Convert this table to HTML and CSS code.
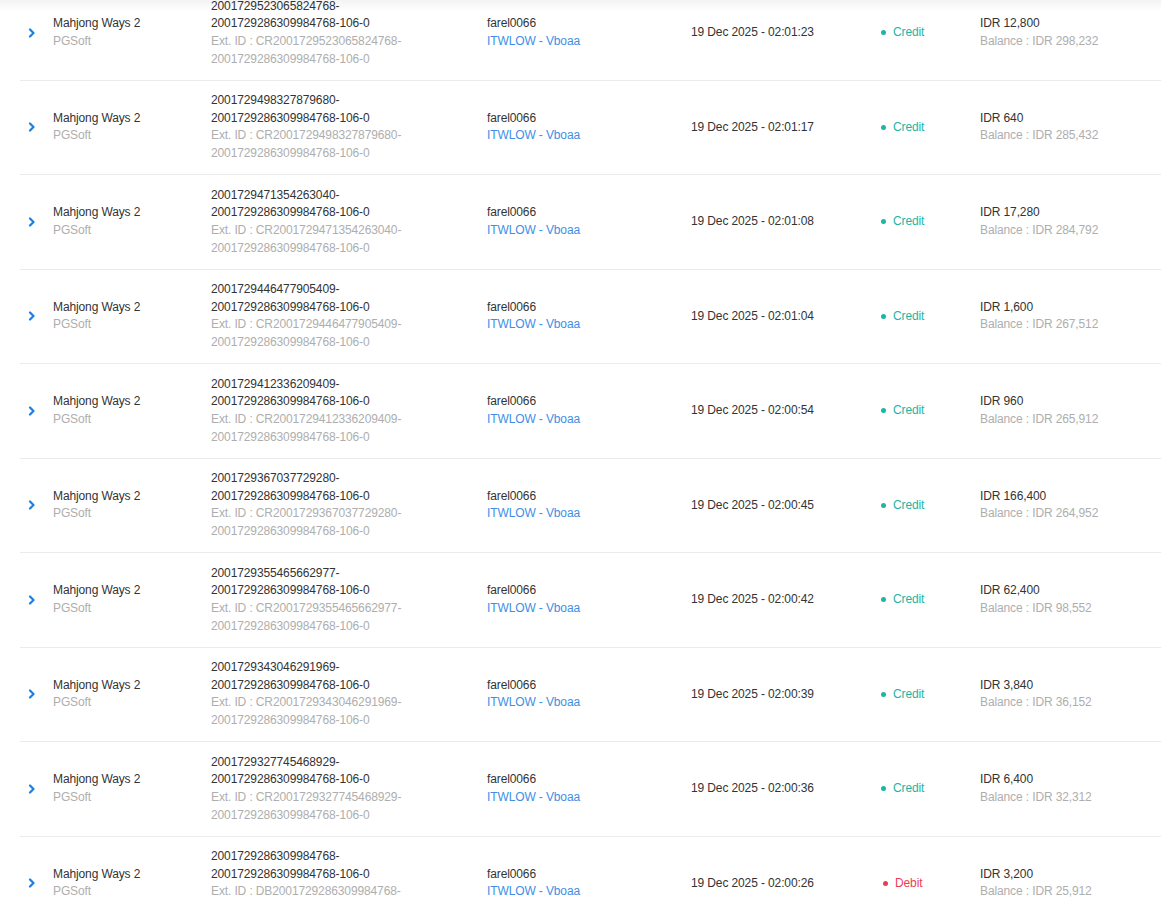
FILE: index.html
```html
<!DOCTYPE html>
<html lang="en">
<head>
<meta charset="utf-8">
<title>Transactions</title>
<link rel="stylesheet" href="styles.css">
</head>
<body>
<div class="top-shade"></div>
<div class="table">

  <div class="row">
    <div class="cell chev"><svg width="8" height="10" viewBox="0 0 8 10"><polyline points="2,1.5 5.5,5 2,8.5" fill="none" stroke="#1a7fe0" stroke-width="2.2" stroke-linecap="round" stroke-linejoin="round"/></svg></div>
    <div class="cell game"><div class="main">Mahjong Ways 2</div><div class="sub">PGSoft</div></div>
    <div class="cell ids"><div class="main">2001729523065824768-2001729286309984768-106-0</div><div class="sub">Ext. ID : CR2001729523065824768-2001729286309984768-106-0</div></div>
    <div class="cell player"><div class="main">farel0066</div><div class="link">ITWLOW - Vboaa</div></div>
    <div class="cell date">19 Dec 2025 - 02:01:23</div>
    <div class="cell status credit"><span class="dot"></span>Credit</div>
    <div class="cell amount"><div class="main">IDR 12,800</div><div class="sub">Balance : IDR 298,232</div></div>
  </div>

  <div class="row">
    <div class="cell chev"><svg width="8" height="10" viewBox="0 0 8 10"><polyline points="2,1.5 5.5,5 2,8.5" fill="none" stroke="#1a7fe0" stroke-width="2.2" stroke-linecap="round" stroke-linejoin="round"/></svg></div>
    <div class="cell game"><div class="main">Mahjong Ways 2</div><div class="sub">PGSoft</div></div>
    <div class="cell ids"><div class="main">2001729498327879680-2001729286309984768-106-0</div><div class="sub">Ext. ID : CR2001729498327879680-2001729286309984768-106-0</div></div>
    <div class="cell player"><div class="main">farel0066</div><div class="link">ITWLOW - Vboaa</div></div>
    <div class="cell date">19 Dec 2025 - 02:01:17</div>
    <div class="cell status credit"><span class="dot"></span>Credit</div>
    <div class="cell amount"><div class="main">IDR 640</div><div class="sub">Balance : IDR 285,432</div></div>
  </div>

  <div class="row">
    <div class="cell chev"><svg width="8" height="10" viewBox="0 0 8 10"><polyline points="2,1.5 5.5,5 2,8.5" fill="none" stroke="#1a7fe0" stroke-width="2.2" stroke-linecap="round" stroke-linejoin="round"/></svg></div>
    <div class="cell game"><div class="main">Mahjong Ways 2</div><div class="sub">PGSoft</div></div>
    <div class="cell ids"><div class="main">2001729471354263040-2001729286309984768-106-0</div><div class="sub">Ext. ID : CR2001729471354263040-2001729286309984768-106-0</div></div>
    <div class="cell player"><div class="main">farel0066</div><div class="link">ITWLOW - Vboaa</div></div>
    <div class="cell date">19 Dec 2025 - 02:01:08</div>
    <div class="cell status credit"><span class="dot"></span>Credit</div>
    <div class="cell amount"><div class="main">IDR 17,280</div><div class="sub">Balance : IDR 284,792</div></div>
  </div>

  <div class="row">
    <div class="cell chev"><svg width="8" height="10" viewBox="0 0 8 10"><polyline points="2,1.5 5.5,5 2,8.5" fill="none" stroke="#1a7fe0" stroke-width="2.2" stroke-linecap="round" stroke-linejoin="round"/></svg></div>
    <div class="cell game"><div class="main">Mahjong Ways 2</div><div class="sub">PGSoft</div></div>
    <div class="cell ids"><div class="main">2001729446477905409-2001729286309984768-106-0</div><div class="sub">Ext. ID : CR2001729446477905409-2001729286309984768-106-0</div></div>
    <div class="cell player"><div class="main">farel0066</div><div class="link">ITWLOW - Vboaa</div></div>
    <div class="cell date">19 Dec 2025 - 02:01:04</div>
    <div class="cell status credit"><span class="dot"></span>Credit</div>
    <div class="cell amount"><div class="main">IDR 1,600</div><div class="sub">Balance : IDR 267,512</div></div>
  </div>

  <div class="row">
    <div class="cell chev"><svg width="8" height="10" viewBox="0 0 8 10"><polyline points="2,1.5 5.5,5 2,8.5" fill="none" stroke="#1a7fe0" stroke-width="2.2" stroke-linecap="round" stroke-linejoin="round"/></svg></div>
    <div class="cell game"><div class="main">Mahjong Ways 2</div><div class="sub">PGSoft</div></div>
    <div class="cell ids"><div class="main">2001729412336209409-2001729286309984768-106-0</div><div class="sub">Ext. ID : CR2001729412336209409-2001729286309984768-106-0</div></div>
    <div class="cell player"><div class="main">farel0066</div><div class="link">ITWLOW - Vboaa</div></div>
    <div class="cell date">19 Dec 2025 - 02:00:54</div>
    <div class="cell status credit"><span class="dot"></span>Credit</div>
    <div class="cell amount"><div class="main">IDR 960</div><div class="sub">Balance : IDR 265,912</div></div>
  </div>

  <div class="row">
    <div class="cell chev"><svg width="8" height="10" viewBox="0 0 8 10"><polyline points="2,1.5 5.5,5 2,8.5" fill="none" stroke="#1a7fe0" stroke-width="2.2" stroke-linecap="round" stroke-linejoin="round"/></svg></div>
    <div class="cell game"><div class="main">Mahjong Ways 2</div><div class="sub">PGSoft</div></div>
    <div class="cell ids"><div class="main">2001729367037729280-2001729286309984768-106-0</div><div class="sub">Ext. ID : CR2001729367037729280-2001729286309984768-106-0</div></div>
    <div class="cell player"><div class="main">farel0066</div><div class="link">ITWLOW - Vboaa</div></div>
    <div class="cell date">19 Dec 2025 - 02:00:45</div>
    <div class="cell status credit"><span class="dot"></span>Credit</div>
    <div class="cell amount"><div class="main">IDR 166,400</div><div class="sub">Balance : IDR 264,952</div></div>
  </div>

  <div class="row">
    <div class="cell chev"><svg width="8" height="10" viewBox="0 0 8 10"><polyline points="2,1.5 5.5,5 2,8.5" fill="none" stroke="#1a7fe0" stroke-width="2.2" stroke-linecap="round" stroke-linejoin="round"/></svg></div>
    <div class="cell game"><div class="main">Mahjong Ways 2</div><div class="sub">PGSoft</div></div>
    <div class="cell ids"><div class="main">2001729355465662977-2001729286309984768-106-0</div><div class="sub">Ext. ID : CR2001729355465662977-2001729286309984768-106-0</div></div>
    <div class="cell player"><div class="main">farel0066</div><div class="link">ITWLOW - Vboaa</div></div>
    <div class="cell date">19 Dec 2025 - 02:00:42</div>
    <div class="cell status credit"><span class="dot"></span>Credit</div>
    <div class="cell amount"><div class="main">IDR 62,400</div><div class="sub">Balance : IDR 98,552</div></div>
  </div>

  <div class="row">
    <div class="cell chev"><svg width="8" height="10" viewBox="0 0 8 10"><polyline points="2,1.5 5.5,5 2,8.5" fill="none" stroke="#1a7fe0" stroke-width="2.2" stroke-linecap="round" stroke-linejoin="round"/></svg></div>
    <div class="cell game"><div class="main">Mahjong Ways 2</div><div class="sub">PGSoft</div></div>
    <div class="cell ids"><div class="main">2001729343046291969-2001729286309984768-106-0</div><div class="sub">Ext. ID : CR2001729343046291969-2001729286309984768-106-0</div></div>
    <div class="cell player"><div class="main">farel0066</div><div class="link">ITWLOW - Vboaa</div></div>
    <div class="cell date">19 Dec 2025 - 02:00:39</div>
    <div class="cell status credit"><span class="dot"></span>Credit</div>
    <div class="cell amount"><div class="main">IDR 3,840</div><div class="sub">Balance : IDR 36,152</div></div>
  </div>

  <div class="row">
    <div class="cell chev"><svg width="8" height="10" viewBox="0 0 8 10"><polyline points="2,1.5 5.5,5 2,8.5" fill="none" stroke="#1a7fe0" stroke-width="2.2" stroke-linecap="round" stroke-linejoin="round"/></svg></div>
    <div class="cell game"><div class="main">Mahjong Ways 2</div><div class="sub">PGSoft</div></div>
    <div class="cell ids"><div class="main">2001729327745468929-2001729286309984768-106-0</div><div class="sub">Ext. ID : CR2001729327745468929-2001729286309984768-106-0</div></div>
    <div class="cell player"><div class="main">farel0066</div><div class="link">ITWLOW - Vboaa</div></div>
    <div class="cell date">19 Dec 2025 - 02:00:36</div>
    <div class="cell status credit"><span class="dot"></span>Credit</div>
    <div class="cell amount"><div class="main">IDR 6,400</div><div class="sub">Balance : IDR 32,312</div></div>
  </div>

  <div class="row">
    <div class="cell chev"><svg width="8" height="10" viewBox="0 0 8 10"><polyline points="2,1.5 5.5,5 2,8.5" fill="none" stroke="#1a7fe0" stroke-width="2.2" stroke-linecap="round" stroke-linejoin="round"/></svg></div>
    <div class="cell game"><div class="main">Mahjong Ways 2</div><div class="sub">PGSoft</div></div>
    <div class="cell ids"><div class="main">2001729286309984768-2001729286309984768-106-0</div><div class="sub">Ext. ID : DB2001729286309984768-2001729286309984768-106-0</div></div>
    <div class="cell player"><div class="main">farel0066</div><div class="link">ITWLOW - Vboaa</div></div>
    <div class="cell date">19 Dec 2025 - 02:00:26</div>
    <div class="cell status debit"><span class="dot"></span>Debit</div>
    <div class="cell amount"><div class="main">IDR 3,200</div><div class="sub">Balance : IDR 25,912</div></div>
  </div>

</div>
</body>
</html>
```

FILE: styles.css
```css
html, body {
  margin: 0;
  padding: 0;
  background: #fff;
}

body {
  font-family: "Liberation Sans", Arial, sans-serif;
  font-size: 12px;
  letter-spacing: -0.12px;
  color: #333;
  overflow: hidden;
}

.top-shade {
  position: fixed;
  top: 0;
  left: 0;
  right: 0;
  height: 12px;
  background: linear-gradient(to bottom, rgba(0, 0, 0, 0.045), rgba(0, 0, 0, 0));
  pointer-events: none;
  z-index: 5;
}

.table {
  margin-top: -13.8px;
  margin-left: 20px;
}

.row {
  display: grid;
  grid-template-columns: 33px 158px 276px 204px 190px 99px 1fr;
  align-items: center;
  border-bottom: 1px solid #ebebeb;
  line-height: 17.625px;
}

.cell {
  padding: 11.5px 0;
}

.chev {
  display: flex;
  align-items: center;
  padding-left: 8px;
}

.chev svg {
  display: block;
}

.ids {
  max-width: 205px;
}

.main {
  color: #333;
}

.sub {
  color: #aeaeae;
}

.link {
  color: #3d8fe6;
}

.date {
  color: #333;
}

.status {
  display: flex;
  align-items: center;
}

.dot {
  width: 5px;
  height: 5px;
  border-radius: 50%;
  margin-right: 7px;
}

.credit {
  color: #1db5a4;
}

.credit .dot {
  background: #1db5a4;
}

.debit {
  color: #ec3d55;
  padding-left: 2px;
}

.debit .dot {
  background: #ec3d55;
}
```
